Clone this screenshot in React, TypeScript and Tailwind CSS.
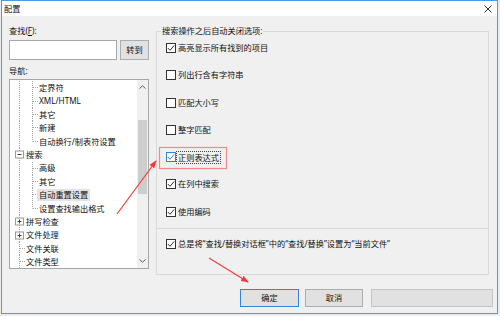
import React from "react";

type Kind = "child" | "childLast" | "leaf" | "plus" | "minus";

const LINE = "#a3a3a3";
const ROW_H = 13.4;

function TreeLines({ kind }: { kind: Kind }) {
  const m = 6.5;
  if (kind === "child" || kind === "childLast") {
    return (
      <svg width="29" height={ROW_H} className="shrink-0">
        <line x1="9.5" y1="0" x2="9.5" y2={ROW_H} stroke={LINE} strokeDasharray="1 1" />
        <line x1="22.5" y1="0" x2="22.5" y2={kind === "child" ? ROW_H : m} stroke={LINE} strokeDasharray="1 1" />
        <line x1="23" y1={m} x2="28" y2={m} stroke={LINE} strokeDasharray="1 1" />
      </svg>
    );
  }
  if (kind === "leaf") {
    return (
      <svg width="16" height={ROW_H} className="shrink-0">
        <line x1="9.5" y1="0" x2="9.5" y2={ROW_H} stroke={LINE} strokeDasharray="1 1" />
        <line x1="10" y1={m} x2="15" y2={m} stroke={LINE} strokeDasharray="1 1" />
      </svg>
    );
  }
  return (
    <svg width="16" height={ROW_H} className="shrink-0">
      <line x1="9.5" y1="0" x2="9.5" y2="3" stroke={LINE} strokeDasharray="1 1" />
      <line x1="9.5" y1="10" x2="9.5" y2={ROW_H} stroke={LINE} strokeDasharray="1 1" />
      <rect x="5.5" y="3" width="8" height="7" fill="#ffffff" stroke="#9a9a9a" />
      <line x1="7.5" y1="6.5" x2="11.5" y2="6.5" stroke="#404040" />
      {kind === "plus" && <line x1="9.5" y1="4.5" x2="9.5" y2="8.5" stroke="#404040" />}
    </svg>
  );
}

function TreeRow({ kind, label, selected }: { kind: Kind; label: string; selected?: boolean }) {
  return (
    <div className="flex h-[13.4px] items-center whitespace-nowrap">
      <TreeLines kind={kind} />
      <span className={selected ? "-ml-[2px] bg-[#e3e3e3] px-[2px] leading-[12px]" : "leading-[12px]"}>{label}</span>
    </div>
  );
}

function Check({ checked, focus }: { checked: boolean; focus?: boolean }) {
  const c = focus ? "#2b86dc" : "#333333";
  return (
    <span
      className={`flex h-[10px] w-[10px] shrink-0 items-center justify-center border bg-white ${
        focus ? "border-[#2b86dc]" : "border-[#333333]"
      }`}
    >
      {checked && (
        <svg width="8" height="8" viewBox="0 0 8 8">
          <path d="M0.8 4 L3 6.3 L7.2 1.4" fill="none" stroke={c} strokeWidth="1" />
        </svg>
      )}
    </span>
  );
}

function Option({ label, checked, focus }: { label: string; checked: boolean; focus?: boolean }) {
  return (
    <div className="flex h-[14px] items-center whitespace-nowrap">
      <Check checked={checked} focus={focus} />
      {focus ? (
        <span className="border border-dotted border-[#444444] px-[1px] leading-[11px]">{label}</span>
      ) : (
        <span className="ml-[2px] leading-[12px]">{label}</span>
      )}
    </div>
  );
}

export default function App() {
  return (
    <div className="relative h-[316px] w-[500px] overflow-hidden bg-[#e8edf2] font-['Noto_Sans','Noto_Sans_CJK_SC',sans-serif] text-[8.2px] text-[#111111]">
      <div className="ml-[1px] flex h-[314px] w-[497px] flex-col border border-[#4b9ae2] bg-[#f0f0f0]">
        {/* title bar */}
        <div className="flex h-[15px] shrink-0 items-center justify-between bg-white pl-[2px] pr-[5px]">
          <span className="leading-[12px]">配置</span>
          <svg width="8" height="8" viewBox="0 0 8 8">
            <path d="M0.5 0.5 L7.5 7.5 M7.5 0.5 L0.5 7.5" stroke="#333333" strokeWidth="1" />
          </svg>
        </div>

        <div className="flex h-[259px] shrink-0 pl-[7px] pt-[9px]">
          {/* left column */}
          <div className="flex w-[140px] shrink-0 flex-col">
            <div className="h-[12px] leading-[12px]">
              查找(<span className="underline">F</span>):
            </div>
            <div className="mt-[3px] flex h-[20px] gap-[3px]">
              <div className="h-full w-[108px] border border-[#a6a6a6] bg-white" />
              <button className="flex h-full flex-1 items-center justify-center border border-[#adadad] bg-[#e1e1e1] leading-[12px]">
                转到
              </button>
            </div>
            <div className="mt-[5px] h-[12px] leading-[12px]">导航:</div>
            <div className="mt-[2px] flex h-[190px] overflow-hidden border border-[#a6a6a6] bg-white">
              <div className="flex-1 overflow-hidden pt-[1.3px]">
                <TreeRow kind="child" label="定界符" />
                <TreeRow kind="child" label="XML/HTML" />
                <TreeRow kind="child" label="其它" />
                <TreeRow kind="child" label="新建" />
                <TreeRow kind="childLast" label="自动换行/制表符设置" />
                <TreeRow kind="minus" label="搜索" />
                <TreeRow kind="child" label="高级" />
                <TreeRow kind="child" label="其它" />
                <TreeRow kind="child" label="自动重置设置" selected />
                <TreeRow kind="childLast" label="设置查找输出格式" />
                <TreeRow kind="plus" label="拼写检查" />
                <TreeRow kind="plus" label="文件处理" />
                <TreeRow kind="leaf" label="文件关联" />
                <TreeRow kind="leaf" label="文件类型" />
              </div>
              {/* scrollbar */}
              <div className="flex w-[11px] shrink-0 flex-col bg-[#f0f0f0]">
                <div className="flex h-[14px] items-center justify-center">
                  <svg width="7" height="4" viewBox="0 0 7 4">
                    <path d="M0.5 3.5 L3.5 0.8 L6.5 3.5" fill="none" stroke="#606060" strokeWidth="1" />
                  </svg>
                </div>
                <div className="mx-[1px] mt-[26px] h-[74px] bg-[#cdcdcd]" />
                <div className="flex-1" />
                <div className="flex h-[14px] items-center justify-center">
                  <svg width="7" height="4" viewBox="0 0 7 4">
                    <path d="M0.5 0.5 L3.5 3.2 L6.5 0.5" fill="none" stroke="#606060" strokeWidth="1" />
                  </svg>
                </div>
              </div>
            </div>
          </div>

          {/* right group box */}
          <fieldset className="ml-[7px] h-[250px] w-[333px] shrink-0 border border-[#d9d9d9] px-[4px]">
            <legend className="px-[1px] leading-[12px]">搜索操作之后自动关闭选项:</legend>
            <div className="flex flex-col gap-[13.3px] pl-[5px] pt-[4px]">
              <Option label="高亮显示所有找到的项目" checked />
              <Option label="列出行含有字符串" checked={false} />
              <Option label="匹配大小写" checked={false} />
              <Option label="整字匹配" checked={false} />
              <Option label="正则表达式" checked focus />
              <Option label="在列中搜索" checked />
              <Option label="使用编码" checked />
            </div>
            <div className="-mx-[4px] mt-[9px] border-t border-[#d9d9d9] pl-[9px] pt-[8px]">
              <Option label="总是将“查找/替换对话框”中的“查找/替换”设置为“当前文件”" checked />
            </div>
          </fieldset>
        </div>

        {/* bottom buttons */}
        <div className="mt-[14px] flex h-[18px] justify-end pr-[4px]">
          <button className="flex h-full w-[59px] items-center justify-center border-[1.5px] border-[#2f86db] bg-[#e1e1e1] leading-[12px]">
            确定
          </button>
          <button className="ml-[6px] flex h-full w-[58px] items-center justify-center border border-[#adadad] bg-[#e1e1e1] leading-[12px]">
            取消
          </button>
          <button className="ml-[8px] h-full w-[122px] border border-[#c4c4c4] bg-[#e1e1e1]" />
        </div>
      </div>

      {/* red annotations */}
      <svg className="pointer-events-none absolute left-0 top-0" width="500" height="316">
        <defs>
          <marker id="head" markerWidth="8" markerHeight="6" refX="7" refY="3" orient="auto" markerUnits="userSpaceOnUse">
            <path d="M0 0 L8 3 L0 6 Z" fill="#f23a3a" />
          </marker>
        </defs>
        <rect x="159.5" y="147.5" width="67" height="21" fill="none" stroke="#f08a8a" strokeWidth="1.2" />
        <line x1="117" y1="214" x2="156" y2="161" stroke="#f23a3a" strokeWidth="1.2" markerEnd="url(#head)" />
        <line x1="209" y1="258" x2="248" y2="282" stroke="#f23a3a" strokeWidth="1.2" markerEnd="url(#head)" />
      </svg>
    </div>
  );
}
